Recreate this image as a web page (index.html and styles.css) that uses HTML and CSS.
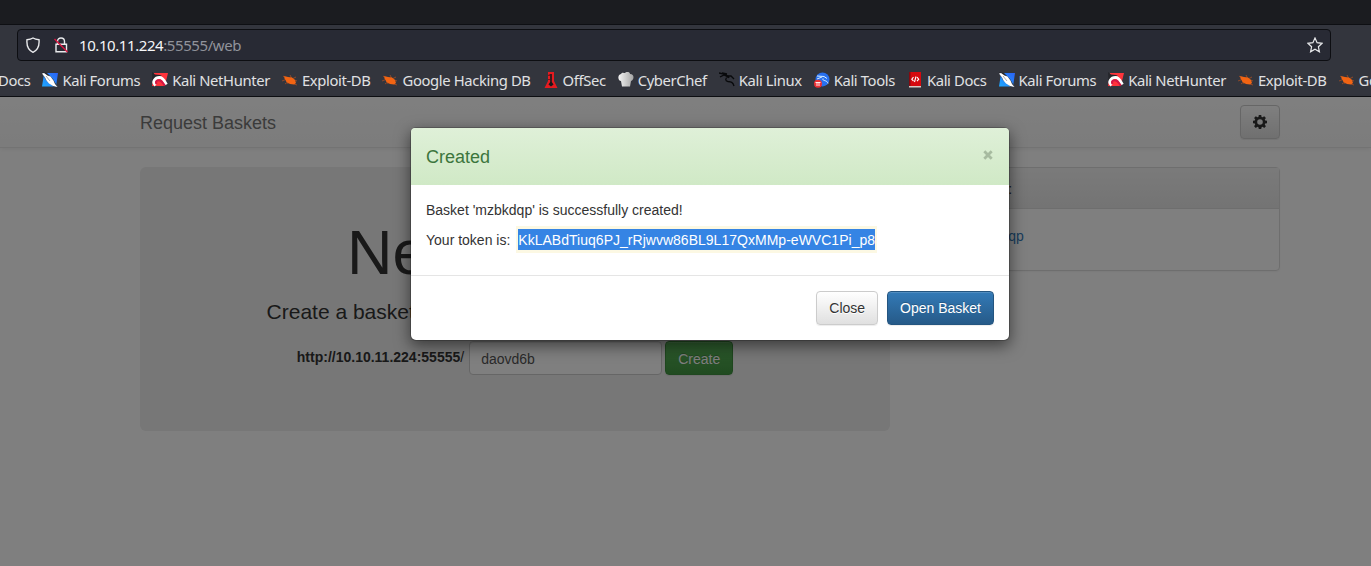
FILE: index.html
```
<!DOCTYPE html>
<html lang="en">
<head>
<meta charset="utf-8">
<title>Request Baskets</title>
<link rel="stylesheet" href="styles.css">
</head>
<body>
<svg class="sprite" aria-hidden="true">
  <defs>
    <linearGradient id="blue" x1="0" y1="1" x2="1" y2="0"><stop offset="0" stop-color="#1ea8ff"/><stop offset="1" stop-color="#2b62f5"/></linearGradient>
    <linearGradient id="hat"><stop offset="0" stop-color="#f4f4f4"/><stop offset="1" stop-color="#a5a5a5"/></linearGradient>
  </defs>
  <symbol id="forums" viewBox="0 0 16 16">
    <path fill="url(#blue)" d="M2 1h14l-2 13.500H0L1.500 5z"/>
    <path fill="#25262b" d="M0 0l5 1 6 6 4 7-3 1-8-7z"/>
    <path fill="#fff" d="M0 1.500l2-.5 3.500 2.500 3 1 3 4L13 12l2.500 3-4.500-1-4-2.500-2.500-3L3 5.500z"/>
    <path fill="none" stroke="#6b7078" stroke-width=".6" d="M4 4l4 5"/>
  </symbol>
  <symbol id="hunter" viewBox="0 0 16 16">
    <path fill="#ff343b" d="M2 1h14l-2.500 10-2 3H0l1-6z"/>
    <path fill="#25262b" d="M0 0l3 2.500 5 .5 2 1-4 1-4 4-1.500 2z"/>
    <path fill="none" stroke="#fff" stroke-width="2.800" d="M3.500 13.500C-.5 10 3 5.500 7.500 5.500c4 0 5 4 7 7"/>
    <path fill="none" stroke="#d31746" stroke-width="2" d="M4.500 12C3 9 5.500 7.500 8 8.500c2.500 1 3 3.500 5 5"/>
  </symbol>
  <symbol id="exploit" viewBox="0 0 16 16">
    <path fill="none" stroke="#a64e23" stroke-width=".8" d="M1 4l4 3 1 5M0 9l5-2M3 12l4-3M8 3l2 4 4-2M12 12l3 1M10 7l5 2M2 6l4 2"/>
    <path fill="#f26413" d="M2 4l4 1 4 .5 3 2.500 1 3-2 1.500-4-.5L4.500 10 3 7z"/>
  </symbol>
  <symbol id="offsec" viewBox="0 0 16 16">
    <path fill="#e41b20" d="M5 0h6v9l3.500 7h-13L5 9z"/>
    <path fill="#17181b" d="M7.200 2h1.600v8l1.700 2.500L8 14.500 5.500 12.500 7.200 10z"/>
    <path fill="#7f1114" d="M5 3l2-1v2H5zm0 4h2v1H5z"/>
  </symbol>
  <symbol id="chef" viewBox="0 0 16 16">
    <path fill="url(#hat)" d="M3 9C0 9-1 3 3 2c1-2 3-1 4-1 2-2 5-1 5 1 5 0 4 6 1 7l-1 5.500H4z"/>
  </symbol>
  <symbol id="dragon" viewBox="0 0 16 16">
    <path fill="none" stroke="#08090b" stroke-width="1.300" d="M0 1l5 1 4 2 1 2M1 5l4-2 4 2M3 1l5 1M9 5c-3 1-3 4 0 4.500 3 .3 5 .5 6 4.500M9 4l3 0 3 3"/>
  </symbol>
  <symbol id="tools" viewBox="0 0 16 16">
    <circle cx="8.500" cy="7.400" r="7" fill="#2870ee"/>
    <path fill="none" stroke="#d8efff" stroke-width="1" d="M3 4l7 .5 3 2M3 7l5-2M9 6.500c-1 3 4 1 5 5"/>
    <circle cx="4" cy="11.800" r="4" fill="#ed3034"/>
    <path fill="none" stroke="#fff" stroke-width=".9" d="M1.500 10.500h5M3 10.500v3.500M5 10.500v3.500"/>
  </symbol>
  <symbol id="docs" viewBox="0 0 16 16">
    <path fill="#d6090e" d="M2 0h12v15H2z"/>
    <path fill="#860a10" d="M2 0h1.500v14H2z"/>
    <path fill="#dac8c3" d="M2 14h12v1.500H2z"/>
    <path fill="none" stroke="#fff" stroke-width="1.100" d="M6.500 5.200L4.800 7.200l1.700 2m3.500-4l1.700 2-1.700 2M9 4.500L7.500 10"/>
  </symbol>
</svg>

<header class="browser">
  <div class="tabs"></div>
  <div class="toolbar">
    <div class="address">
      <svg class="shield" viewBox="0 0 16 16"><path d="M8 1c2 1.200 3.700 1.500 6 1.700C14.500 8 13 13 8 15.300 3 13 1.500 8 2 2.700 4.300 2.500 6 2.200 8 1z"/></svg>
      <svg class="lock" viewBox="0 0 16 16"><path d="M4.500 7V4.500C4.500-.2 11.500-.2 11.500 4.500V7M3 7.300h10.500v7.400H3z"/><path class="slash" d="M1.500 2l13 13"/></svg>
      <span class="url"><b>10.10.11.224</b>:55555/web</span>
      <svg class="star" viewBox="0 0 16 16"><path d="M8 1l2.100 4.700 5 .6-3.700 3.500 1 5L8 12.300 3.600 14.800l1-5L.9 6.300l5-.6z"/></svg>
    </div>
  </div>
  <nav class="bookmarks">
    <a class="cut">Docs</a>
    <a><svg><use href="#forums"/></svg>Kali Forums</a>
    <a><svg><use href="#hunter"/></svg>Kali NetHunter</a>
    <a><svg><use href="#exploit"/></svg>Exploit-DB</a>
    <a><svg><use href="#exploit"/></svg>Google Hacking DB</a>
    <a><svg><use href="#offsec"/></svg>OffSec</a>
    <a><svg><use href="#chef"/></svg>CyberChef</a>
    <a><svg><use href="#dragon"/></svg>Kali Linux</a>
    <a><svg><use href="#tools"/></svg>Kali Tools</a>
    <a><svg><use href="#docs"/></svg>Kali Docs</a>
    <a><svg><use href="#forums"/></svg>Kali Forums</a>
    <a><svg><use href="#hunter"/></svg>Kali NetHunter</a>
    <a><svg><use href="#exploit"/></svg>Exploit-DB</a>
    <a><svg><use href="#exploit"/></svg>Google Hacking DB</a>
  </nav>
</header>

<div class="page">
  <nav class="navbar">
    <div class="container">
      <span class="brand">Request Baskets</span>
      <button class="btn btn-default settings" aria-label="Settings"><svg viewBox="0 0 14 14"><path fill-rule="evenodd" d="M5.800 0h2.400l.4 1.900 1 .4L11.200 1.200l1.700 1.700-1.100 1.600.4 1 1.800.3v2.400l-1.800.4-.4 1 1.100 1.600-1.700 1.700-1.600-1.100-1 .4-.4 1.800H5.800l-.4-1.800-1-.4-1.600 1.100-1.700-1.700 1.100-1.600-.4-1L0 8.200V5.800l1.800-.3.4-1L1.100 2.900l1.700-1.700 1.600 1.100 1-.4zM7 4.200a2.800 2.800 0 1 0 0 5.600 2.800 2.800 0 0 0 0-5.600z"/></svg></button>
    </div>
  </nav>
  <main class="container row">
    <section class="jumbotron">
      <h1>New Basket</h1>
      <p>Create a basket to collect and inspect HTTP requests</p>
      <form class="create">
        <label><b>http://10.10.11.224:55555</b>/</label>
        <input class="basket-name" type="text" value="daovd6b">
        <button class="btn btn-success" type="button">Create</button>
      </form>
    </section>
    <aside class="panel">
      <h3>My Baskets:</h3>
      <div class="panel-body"><a>mzbkdqp</a></div>
    </aside>
  </main>
  <div class="backdrop">
    <div class="modal">
      <div class="modal-header">
        <h4>Created</h4>
        <svg class="close" viewBox="0 0 10 10"><path d="M1.300 1.300l7.400 7.400m0-7.400l-7.400 7.400"/></svg>
      </div>
      <div class="modal-body">
        <p>Basket 'mzbkdqp' is successfully created!</p>
        <p class="token"><span>Your token is:</span><mark><span>KkLABdTiuq6PJ_rRjwvw86BL9L17QxMMp-eWVC1Pi_p8</span></mark></p>
      </div>
      <div class="modal-footer">
        <button class="btn btn-default">Close</button>
        <button class="btn btn-primary">Open Basket</button>
      </div>
    </div>
  </div>
</div>
</body>
</html>
```
FILE: styles.css
```
* { box-sizing: border-box; }
body {
  margin: 0;
  height: 566px;
  overflow: hidden;
  display: flex;
  flex-direction: column;
  font: 14px/20px "Liberation Sans", Arial, sans-serif;
  color: #333;
}
h1, h3, h4, p { margin: 0; font-weight: 400; }
.sprite { position: absolute; width: 0; height: 0; }

/* Browser chrome */
.browser {
  flex: none;
  height: 97px;
  background: #33353d;
  border-bottom: 1px solid #0e0f13;
  color: #e0e1e3;
  font-family: "Noto Sans", sans-serif;
}
.tabs { height: 25px; background: #1b1c20; border-bottom: 1px solid #0e0f13; }
.toolbar { padding: 4px 40px 0 17px; }
.address {
  height: 32px;
  display: flex;
  align-items: center;
  padding: 0 7px;
  background: #282a34;
  border: 1px solid #0d0e12;
  border-radius: 4px;
}
.address svg { width: 16px; height: 16px; fill: none; stroke: #e9eaec; stroke-width: 1.4; }
.address .lock { margin-left: 12px; }
.address .slash { stroke: #d9143f; }
.address .star { margin-left: auto; stroke-width: 1.2; }
.url { margin-left: 10px; font-size: 15px; letter-spacing: -.42px; color: #91939b; }
.url b { font-weight: 400; color: #f5f6f8; }
.bookmarks {
  height: 35px;
  padding-top: 2px;
  display: flex;
  gap: 12px;
  align-items: center;
  overflow: hidden;
  font-size: 14.8px;
  letter-spacing: -.37px;
  white-space: nowrap;
}
.bookmarks a { display: flex; flex: none; gap: 4px; align-items: center; }
.bookmarks svg { width: 16px; height: 16px; }
.bookmarks .cut { margin-left: -2px; }

/* Page */
.page { position: relative; flex: 1; background: #fff; }
.container { width: 1140px; margin-left: 140px; display: flex; }
.navbar {
  height: 51px;
  background: linear-gradient(#fff, #f8f8f8);
  border-bottom: 1px solid #e7e7e7;
  box-shadow: 0 1px 5px rgba(0, 0, 0, .075);
}
.navbar .container { height: 50px; align-items: center; justify-content: space-between; }
.brand { font-size: 18px; color: #777; padding-top: 2px; }
.row { gap: 30px; align-items: flex-start; padding-top: 19px; }
.jumbotron {
  width: 750px;
  height: 264px;
  padding-top: 51px;
  text-align: center;
  background: #eee;
  border-radius: 6px;
}
.jumbotron h1 { font-size: 63px; line-height: 69px; }
.jumbotron p { margin-top: 10px; font-size: 21px; line-height: 30px; }
.create { display: flex; justify-content: center; margin-top: 14px; }
.create label { line-height: 32px; margin-right: 5px; }
.create .btn, .basket-name { padding-top: 7px; padding-bottom: 5px; }
.basket-name {
  width: 193px;
  height: 34px;
  margin-right: 3px;
  padding-left: 11px;
  padding-right: 11px;
  border: 1px solid #ccc;
  border-radius: 4px;
  background: #fff;
  box-shadow: inset 0 1px 1px rgba(0, 0, 0, .075);
  font: inherit;
  color: #555;
}
.panel {
  width: 360px;
  height: 104px;
  border: 1px solid #ddd;
  border-radius: 4px;
  box-shadow: 0 1px 2px rgba(0, 0, 0, .05);
}
.panel h3 {
  height: 41px;
  padding: 11px 15px;
  font-size: 14px;
  line-height: 20px;
  border-bottom: 1px solid #ddd;
  background: linear-gradient(#f5f5f5, #e8e8e8);
}
.panel-body { padding: 17px 46px; color: #337ab7; }

.btn {
  height: 34px;
  padding: 6px 12px;
  border: 1px solid;
  border-radius: 4px;
  font: inherit;
  box-shadow: inset 0 1px 0 rgba(255, 255, 255, .15), 0 1px 1px rgba(0, 0, 0, .075);
}
.btn-default { color: #333; background: linear-gradient(#fff, #e0e0e0); border-color: #ccc; text-shadow: 0 1px 0 #fff; }
.btn-primary { color: #fff; background: linear-gradient(#337ab7, #265a88); border-color: #245580; text-shadow: 0 -1px 0 rgba(0, 0, 0, .2); }
.btn-success { color: #fff; background: linear-gradient(#5cb85c, #419641); border-color: #3e8f3e; text-shadow: 0 -1px 0 rgba(0, 0, 0, .2); }
.settings { width: 40px; display: grid; place-items: center; }
.settings svg { width: 14px; height: 14px; fill: #333; }

/* Dialog over the dimmed page */
.backdrop { position: absolute; inset: 0; background: rgba(0, 0, 0, .5); padding: 30px 0 0 410px; }
.modal {
  width: 600px;
  background: #fff;
  background-clip: padding-box;
  border: 1px solid rgba(0, 0, 0, .2);
  border-radius: 6px;
  box-shadow: 0 5px 15px rgba(0, 0, 0, .5);
}
.modal-header {
  height: 57px;
  display: flex;
  justify-content: space-between;
  padding: 16px 15px;
  background: linear-gradient(#dff0d8, #d0e9c6);
  border-radius: 4px 4px 0 0;
}
.modal-header h4 { font-size: 18px; line-height: 26px; color: #3c763d; }
.close { width: 10px; height: 10px; margin: 6px 1px; fill: none; stroke: #a7bba0; stroke-width: 2.8; }
.modal-body { height: 90px; padding: 15px; }
.token { display: flex; gap: 6px; height: 27px; margin-top: 6px; align-items: center; }
mark { display: flex; padding: 3px 2px; background: #fcf8e3; color: #fff; }
mark span { height: 21px; line-height: 23px; letter-spacing: .02px; background: #3584e4; }
.modal-footer {
  height: 65px;
  padding: 15px;
  display: flex;
  gap: 9px;
  justify-content: flex-end;
  border-top: 1px solid #e5e5e5;
}
```
